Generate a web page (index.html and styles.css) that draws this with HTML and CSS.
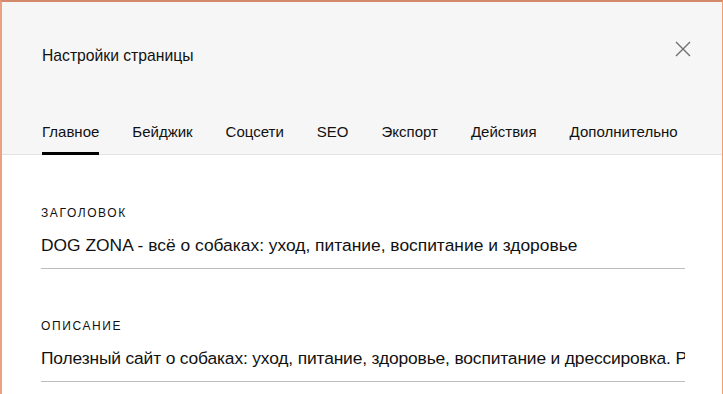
FILE: index.html
```html
<!DOCTYPE html>
<html lang="ru">
<head>
<meta charset="utf-8">
<title>Настройки страницы</title>
<link rel="stylesheet" href="styles.css">
</head>
<body>
<div class="frame">
  <div class="modal">
    <header class="head">
      <div class="title-row">
        <h1 class="title">Настройки страницы</h1>
        <button class="close" aria-label="Закрыть">
          <svg width="16" height="16" viewBox="0 0 16 16"><path d="M1 1 L15 15 M15 1 L1 15" stroke="#6f6f6f" stroke-width="1.4" fill="none"/></svg>
        </button>
      </div>
      <nav class="tabs">
        <span class="tab active">Главное</span>
        <span class="tab">Бейджик</span>
        <span class="tab">Соцсети</span>
        <span class="tab">SEO</span>
        <span class="tab">Экспорт</span>
        <span class="tab">Действия</span>
        <span class="tab">Дополнительно</span>
      </nav>
    </header>
    <main class="body">
      <div class="field">
        <div class="label">Заголовок</div>
        <div class="input">DOG ZONA - всё о собаках: уход, питание, воспитание и здоровье</div>
      </div>
      <div class="field">
        <div class="label">Описание</div>
        <div class="input input-long">Полезный сайт о собаках: уход, питание, здоровье, воспитание и дрессировка. Рекомендации для владельцев собак.</div>
      </div>
    </main>
  </div>
</div>
</body>
</html>
```

FILE: styles.css
```css
html, body {
  margin: 0;
  padding: 0;
  height: 100%;
  overflow: hidden;
}
body {
  background: #ffffff;
  font-family: "Liberation Sans", Arial, sans-serif;
  color: #000;
}
.frame {
  height: 100%;
  box-sizing: border-box;
  border-top: 2px solid #d4896a;
  border-left: 2px solid #eba083;
  border-right: 1px solid #f2a06e;
}
.modal {
  background: #fff;
  height: 100%;
}
.head {
  background: #f6f6f6;
  border-bottom: 1px solid #e3e3e3;
  padding: 0 31px 0 40px;
  height: 153px;
  box-sizing: border-box;
  display: flex;
  flex-direction: column;
}
.title-row {
  display: flex;
  justify-content: space-between;
  align-items: center;
  padding-top: 36px;
  height: 36px;
}
.title {
  margin: 0;
  font-size: 15.7px;
  font-weight: normal;
  line-height: 36px;
  color: #111;
}
.close {
  border: 0;
  background: none;
  padding: 0;
  width: 16px;
  height: 16px;
  margin-top: -15px;
  display: block;
}
.close svg { display: block; }
.tabs {
  margin-top: auto;
  display: flex;
  gap: 33px;
  font-size: 15px;
  color: #111;
}
.tab {
  padding-bottom: 10px;
  line-height: 20px;
  border-bottom: 3px solid transparent;
  margin-bottom: -1px;
}
.tab.active {
  border-bottom-color: #000;
}
.body {
  padding: 50px 37px 0 39px;
  display: flex;
  flex-direction: column;
  gap: 49px;
}
.field {
  display: flex;
  flex-direction: column;
}
.label {
  text-transform: uppercase;
  font-size: 12px;
  letter-spacing: 1.6px;
  line-height: 16px;
  color: #111;
}
.input {
  margin-top: 12px;
  font-size: 17.4px;
  line-height: 24px;
  padding-bottom: 11px;
  border-bottom: 1px solid #bdbdbd;
  white-space: nowrap;
  overflow: hidden;
  color: #111;
}
.input-long {
  letter-spacing: -0.15px;
}
```
